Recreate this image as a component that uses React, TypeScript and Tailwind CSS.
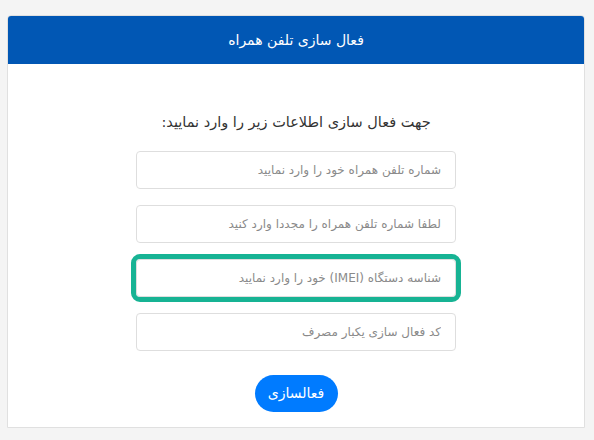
export default function App() {
  const fields = [
    { placeholder: "شماره تلفن همراه خود را وارد نمایید", highlight: false },
    { placeholder: "لطفا شماره تلفن همراه را مجددا وارد کنید", highlight: false },
    { placeholder: "شناسه دستگاه (IMEI) خود را وارد نمایید", highlight: true },
    { placeholder: "کد فعال سازی یکبار مصرف", highlight: false },
  ];

  return (
    <div
      dir="rtl"
      className="h-[440px] w-[594px] overflow-hidden bg-[#f4f4f4] pt-[15px] pl-[7px] pr-[9px] font-['DejaVu_Sans',sans-serif]"
    >
      <div className="overflow-hidden rounded-t-[4px] border border-[#e0e0e0] bg-white">
        {/* Header */}
        <div className="flex h-[48px] items-center justify-center bg-[#0157b4] text-[14px] text-white">
          فعال سازی تلفن همراه
        </div>

        {/* Body */}
        <div className="flex flex-col items-center pt-[46px] pb-[15px]">
          <p className="mb-[17px] text-[14.5px] leading-[24px] text-[#333]">
            جهت فعال سازی اطلاعات زیر را وارد نمایید:
          </p>

          <div className="flex flex-col gap-4">
            {fields.map((f) => (
              <input
                key={f.placeholder}
                type="text"
                placeholder={f.placeholder}
                className={
                  f.highlight
                    ? "h-[38px] w-[320px] rounded-[4px] border border-[#dedede] bg-white px-[14px] text-[12px] text-[#555] outline-[5px] outline-solid outline-[#17b394] placeholder:text-[#8a8a8a]"
                    : "h-[38px] w-[320px] rounded-[4px] border border-[#dedede] bg-white px-[14px] text-[12px] text-[#555] outline-none placeholder:text-[#8a8a8a]"
                }
              />
            ))}
          </div>

          <button className="mt-[24px] h-[37px] w-[83px] rounded-full bg-[#007bff] text-[14px] text-white">
            فعالسازی
          </button>
        </div>
      </div>
    </div>
  );
}
